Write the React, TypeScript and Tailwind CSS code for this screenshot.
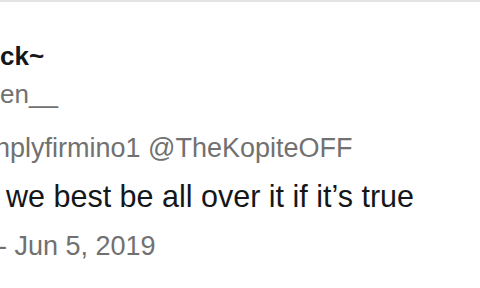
import React from 'react'

export default function App() {
  return (
    <div
      className="w-[480px] h-[288px] overflow-hidden bg-white border-t-2 border-[#e3e3e3] pt-[38px] whitespace-nowrap"
      style={{ fontFamily: '"Liberation Sans", Arial, sans-serif' }}
    >
      {/* name + handle */}
      <div className="text-[26px] leading-[32px] font-bold text-[#14171a]">ck~</div>
      <div className="mt-[6px] text-[26px] leading-[32px] text-[#717171]">en__</div>

      {/* replying to */}
      <div className="mt-[22px] ml-[-5px] text-[27px] leading-[32px] text-[#717171]">
        nplyfirmino1 @TheKopiteOFF
      </div>

      {/* tweet body */}
      <div className="mt-[14px] pl-[6px] text-[30.5px] leading-[36px] text-[#14171a]">
        we best be all over it if it’s true
      </div>

      {/* date */}
      <div className="mt-[16px] ml-[-2px] text-[27px] leading-[32px] text-[#717171]">
        - Jun 5, 2019
      </div>
    </div>
  )
}
